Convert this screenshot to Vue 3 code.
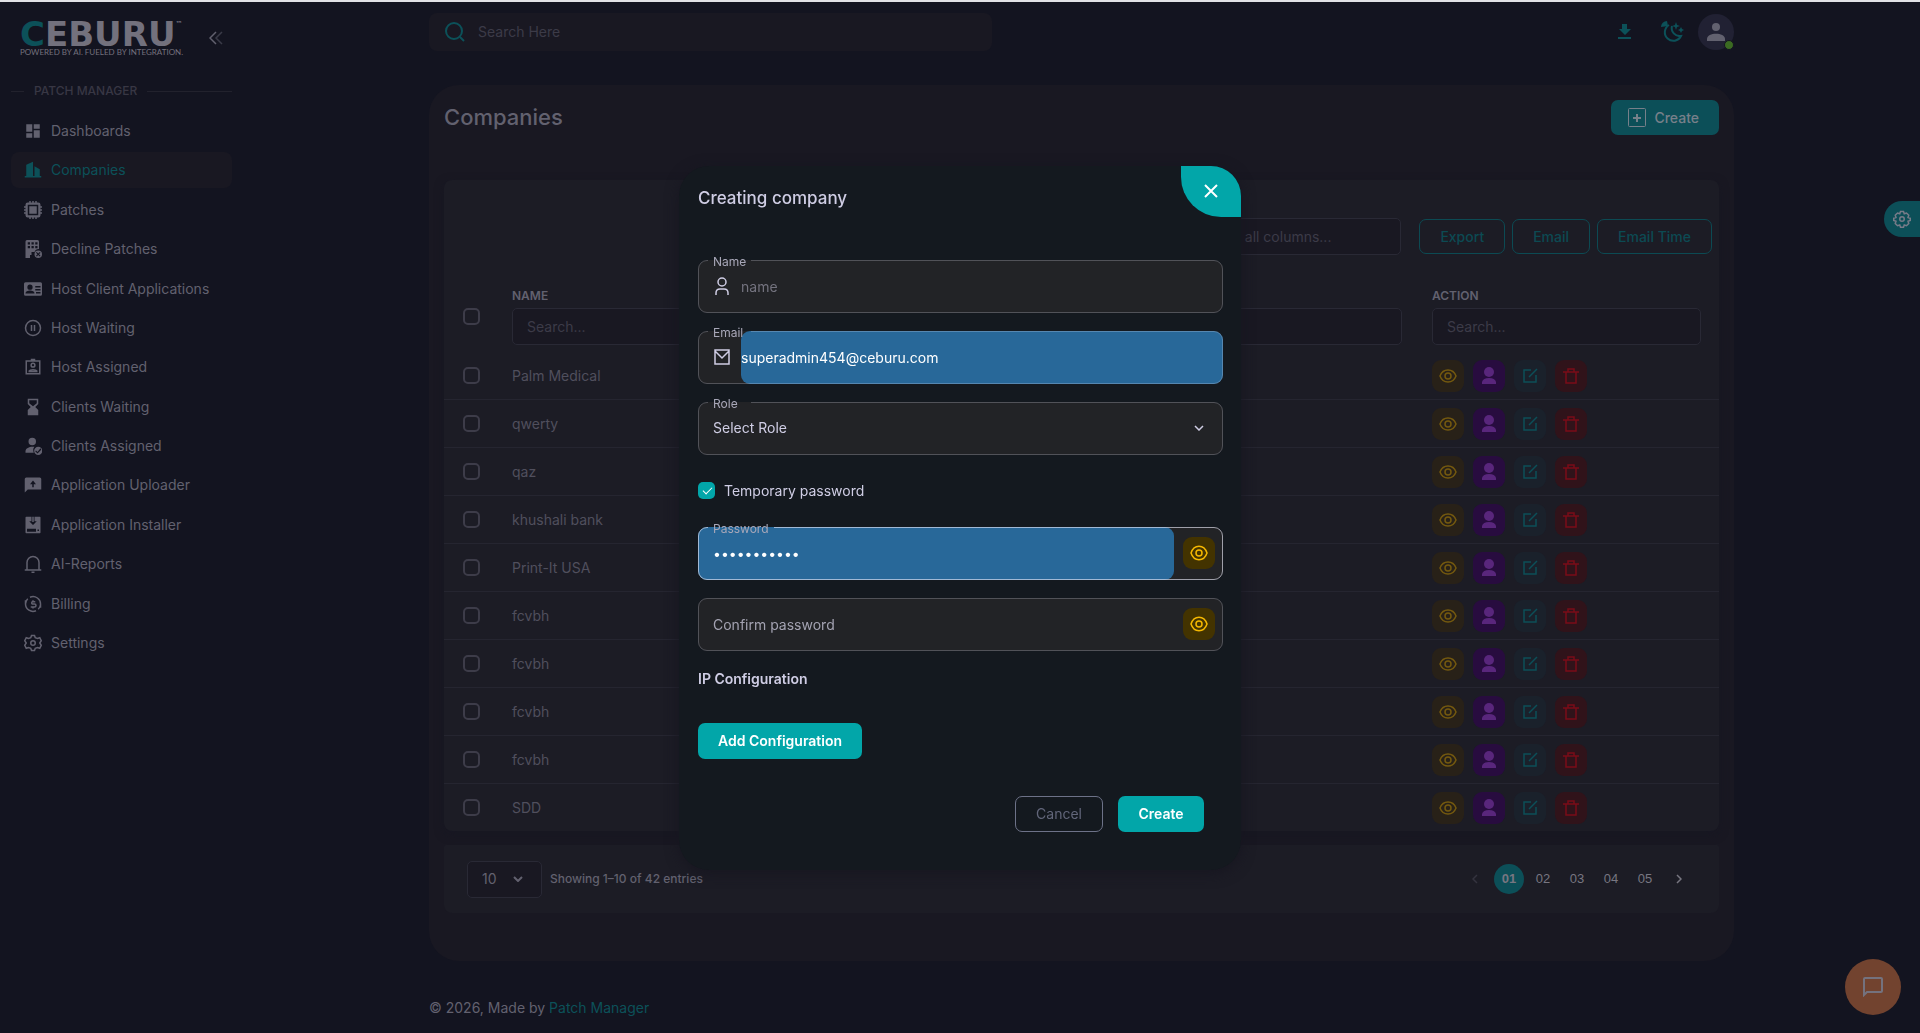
<script setup>
import { ref } from 'vue'

const navItems = [
  { label: 'Dashboards', d: 'M3 13h8V3H3zM3 21h8v-6H3zM13 21h8V11h-8zM13 3v6h8V3z' },
  { label: 'Companies', active: true, d: 'M3 20V5l9-4v19h2V7l7 4v9h2v2H1v-2z' },
  {
    label: 'Patches',
    d: 'M5 2h2V0h2v2h2V0h2v2h2V0h2v2h2a3 3 0 0 1 3 3v2h2v2h-2v2h2v2h-2v2h2v2h-2v2a3 3 0 0 1-3 3h-2v2h-2v-2h-2v2h-2v-2H9v2H7v-2H5a3 3 0 0 1-3-3v-2H0v-2h2v-2H0v-2h2V9H0V7h2V5a3 3 0 0 1 3-3zM5 5v14h14V5zM7 7h10v10H7z'
  },
  {
    label: 'Decline Patches',
    d: 'M4 0h14a2 2 0 0 1 2 2v10a6 6 0 0 0-6 4h-4v4H8v4H2V2a2 2 0 0 1 2-2zM5 3v3h3V3zM10 3v3h3V3zM15 3v3h3V3zM5 8v3h3V8zM10 8v3h3V8zM15 8v3h3V8zM19 14a5 5 0 1 1 0 10a5 5 0 0 1 0-10zM17 16l-1 1 2 2-2 2 1 1 2-2 2 2 1-1-2-2 2-2-1-1-2 2z'
  },
  {
    label: 'Host Client Applications',
    d: 'M2 3h20a2 2 0 0 1 2 2v14a2 2 0 0 1-2 2H2a2 2 0 0 1-2-2V5a2 2 0 0 1 2-2zM8 6a3 3 0 1 0 0 7a3 3 0 0 0 0-7zM2 18h12c0-3-3-4-6-4s-6 1-6 4zM15 8v2h7V8zM15 12v2h7v-2zM16 16v2h6v-2z'
  },
  { label: 'Host Waiting', line: true, d: 'M12 2a10 10 0 1 0 0 20a10 10 0 0 0 0-20zM10 8v8M14 8v8' },
  {
    label: 'Host Assigned',
    line: true,
    d: 'M3 4h18v17H3zM10 4V2h4v2M12 7a2.500 2.500 0 1 0 0 5a2.500 2.500 0 0 0 0-5zM7 18v-1c1-2 9-2 10 0v1z'
  },
  { label: 'Clients Waiting', d: 'M5 1h14v7l-4 4 4 4v7H5v-7l4-4-4-4zM7 3v4l5 4 5-4V3z' },
  {
    label: 'Clients Assigned',
    d: 'M11 1a5 5 0 1 1 0 10a5 5 0 0 1 0-10zM2 21v-2c0-4 5-6 9-6h3c-2 2-2 5-1 8zM19 13a5 5 0 1 1 0 11a5 5 0 0 1 0-11zM18 20l-2-2-1 1 3 3 5-5-1-2z'
  },
  { label: 'Application Uploader', d: 'M3 2h18a2 2 0 0 1 2 2v14H5l-4 4V4a2 2 0 0 1 2-2zM11 15h2v-4h3l-4-5-4 5h3z' },
  {
    label: 'Application Installer',
    d: 'M3 1h7v6H7l5 5 5-5h-3V1h7a1 1 0 0 1 1 1v20a1 1 0 0 1-1 1H3a1 1 0 0 1-1-1V2a1 1 0 0 1 1-1zM4 17v4h12v-4zM18 18v2h2v-2zM11 1h2v7h-2z'
  },
  { label: 'AI-Reports', line: true, d: 'M4 19V10a8 8 0 0 1 16 0v9M1 20h22M10 23h4' },
  {
    label: 'Billing',
    line: true,
    d: 'M8 3a10 10 0 0 1 14 10M2 7v5a10 10 0 0 0 14 9M2 12a10 10 0 0 1 3-7M22 17v-5M22 13a10 10 0 0 1-3 6M15 9H11a2 2 0 0 0 0 3h3a2 2 0 0 1 0 4H9M12 7v2M12 16v2'
  },
  {
    label: 'Settings',
    line: true,
    d: 'M12 9a3 3 0 1 0 0 6a3 3 0 0 0 0-6zM10 2h4l1 3 3 1 3-1 2 4-2 3 2 3-2 4-3-1-3 1-1 3h-4l-1-3-3-1-3 1-2-4 2-3-2-3 2-4 3 1 3-1z'
  }
]

const companies = ['Palm Medical', 'qwerty', 'qaz', 'khushali bank', 'Print-It USA', 'fcvbh', 'fcvbh', 'fcvbh', 'fcvbh', 'SDD']
const pages = ['01', '02', '03', '04', '05']

const email = ref('superadmin454@ceburu.com')
const password = ref('password123')
const temporary = ref(true)
</script>

<template>
  <div class="page">
    <aside class="sidebar">
      <div class="brand">
        <a class="logo" href="#" aria-label="Ceburu">
          <span class="logo-word"><span class="logo-c">C</span>EBURU<sup>™</sup></span>
          <span class="logo-tag">POWERED BY AI. FUELED BY INTEGRATION.</span>
        </a>
        <button class="collapse" aria-label="Collapse menu">
          <svg viewBox="0 0 14 14" width="14" height="14" fill="none" stroke="currentColor" stroke-width="1.500"><path d="M7 1L1 7l6 6" /><path d="M13 1L7 7l6 6" opacity=".5" /></svg>
        </button>
      </div>
      <h2 class="section-title">PATCH MANAGER</h2>
      <nav class="nav">
        <a v-for="item in navItems" :key="item.label" href="#" class="nav-item" :class="{ active: item.active }">
          <svg viewBox="0 0 24 24" width="18" height="18" fill-rule="evenodd" :class="item.line ? 'line' : 'solid'"><path :d="item.d" /></svg>
          {{ item.label }}
        </a>
      </nav>
    </aside>

    <main class="main">
      <header class="topbar">
        <label class="search">
          <svg viewBox="0 0 20 20" width="20" height="20" class="line"><circle cx="9" cy="9" r="8" /><path d="M15 15l4 4" /></svg>
          <input type="text" placeholder="Search Here" aria-label="Search Here" />
        </label>
        <div class="top-actions">
          <button class="bare" aria-label="Download"><svg viewBox="0 0 14 16" width="14" height="16" class="solid"><path d="M4 0h5v5h4l-6 6-6-6h3zM0 13h13v2H0z" /></svg></button>
          <button class="bare" aria-label="Theme">
            <svg viewBox="0 0 24 24" width="24" height="24" class="line"><path d="M9 5a8.500 8.500 0 1 0 12 11a8 8 0 0 1-9-10" /><path class="filled" d="M1 7a6 6 0 0 1 6-6l1 5zM16 2l1 3 3 1-3 1-1 3-1-3-3-1 3-1zM21 7l1 2 2 1-2 1-1 2-1-2-2-1 2-1z" /></svg>
          </button>
          <button class="avatar" aria-label="Account">
            <svg viewBox="0 0 18 18" width="18" height="18" class="solid"><circle cx="9" cy="4" r="4" /><path d="M0 18v-2c0-7 18-7 18 0v2z" /></svg>
            <span class="status"></span>
          </button>
        </div>
      </header>

      <section class="panel">
        <div class="panel-head">
          <h1>Companies</h1>
          <button class="create">
            <svg viewBox="0 0 18 19" width="18" height="19" fill="none" stroke="currentColor"><rect x="0.500" y="0.500" width="17" height="18" rx="1" /><path d="M9 6v8M5 10h8" stroke-width="2" /></svg>
            Create
          </button>
        </div>

        <div class="table-card">
          <div class="toolbar">
            <input type="text" class="box" placeholder="Search all columns..." aria-label="Search all columns" />
            <button class="outline">Export</button>
            <button class="outline">Email</button>
            <button class="outline">Email Time</button>
          </div>
          <table>
            <colgroup><col class="col-check" /><col /><col /><col class="col-action" /></colgroup>
            <thead>
              <tr>
                <th class="check"><input type="checkbox" aria-label="Select all" /></th>
                <th><span>NAME</span><input type="text" class="box" placeholder="Search..." aria-label="Search name" /></th>
                <th><span></span><input type="text" class="box" aria-label="Search column" /></th>
                <th><span>ACTION</span><input type="text" class="box" placeholder="Search..." aria-label="Search action" /></th>
              </tr>
            </thead>
            <tbody>
              <tr v-for="(name, i) in companies" :key="i">
                <td class="check"><input type="checkbox" :aria-label="'Select ' + name" /></td>
                <td>{{ name }}</td>
                <td></td>
                <td>
                  <div class="actions">
                    <button class="act view" aria-label="View"><svg viewBox="0 0 18 14" width="18" height="14" class="line"><path d="M1 7c3-8 13-8 16 0c-3 8-13 8-16 0z" /><circle cx="9" cy="7" r="3" /></svg></button>
                    <button class="act user" aria-label="User"><svg viewBox="0 0 14 17" width="14" height="17" class="solid"><circle cx="7" cy="5" r="5" /><path d="M0 17v-2q1-4 7-4t7 4v2z" /></svg></button>
                    <button class="act edit" aria-label="Edit"><svg viewBox="0 0 16 16" width="16" height="16" class="line"><path d="M9 2H2v12h12V7M7 9l8-8" /></svg></button>
                    <button class="act del" aria-label="Delete"><svg viewBox="0 0 16 16" width="16" height="16" class="line"><path d="M0 4h16M3 4v11h10V4M5 4V1h6v3" /></svg></button>
                  </div>
                </td>
              </tr>
            </tbody>
          </table>
        </div>

        <div class="pager">
          <div class="page-size box">
            <select aria-label="Rows per page"><option>10</option></select>
            <svg viewBox="0 0 10 6" width="10" height="6" class="line"><path d="M1 1l4 4 4-4" /></svg>
          </div>
          <span class="summary">Showing 1–10 of 42 entries</span>
          <div class="pages">
            <button class="arrow off" aria-label="Previous" disabled><svg viewBox="0 0 6 10" width="6" height="10" class="line"><path d="M5 1L1 5l4 4" /></svg></button>
            <button v-for="(p, i) in pages" :key="p" class="page-no" :class="{ current: i === 0 }">{{ p }}</button>
            <button class="arrow" aria-label="Next"><svg viewBox="0 0 6 10" width="6" height="10" class="line"><path d="M1 1l4 4-4 4" /></svg></button>
          </div>
        </div>
      </section>

      <footer class="foot">© 2026, Made by <a href="#">Patch Manager</a></footer>
    </main>

    <button class="settings-tab" aria-label="Customize">
      <svg viewBox="0 0 24 24" width="18" height="18" class="line"><circle cx="12" cy="12" r="3" /><path d="M10 2h4l1 3 3-1 3 3-1 3 3 1v3l-3 1 1 3-3 3-3-1-1 3h-4l-1-3-3 1-3-3 1-3-3-1v-3l3-1-1-3 3-3 3 1z" /></svg>
    </button>
    <button class="chat" aria-label="Chat">
      <svg viewBox="0 0 20 20" width="20" height="20" class="line"><path d="M1 18V2q0-1 1-1h16q1 0 1 1v12q0 1-1 1H4z" /></svg>
    </button>

    <div class="backdrop">
      <form class="dialog" role="dialog" aria-labelledby="dialog-title" @submit.prevent>
        <button type="button" class="close" aria-label="Close"><svg viewBox="0 0 14 14" width="14" height="14" class="line"><path d="M1 1l12 12M13 1L1 13" /></svg></button>
        <h2 id="dialog-title">Creating company</h2>

        <div class="field">
          <svg viewBox="0 0 14 18" width="14" height="18" class="line lead"><circle cx="7" cy="5" r="4" /><path d="M1 18v-2q0-4 4-4h4q4 0 4 4v2" /></svg>
          <input id="name" type="text" placeholder="name" />
          <fieldset><legend><label for="name">Name</label></legend></fieldset>
        </div>
        <div class="field">
          <svg viewBox="0 0 16 16" width="16" height="16" class="line lead mail"><path d="M1 1h14v14H1zM1 2l7 7 7-7" /></svg>
          <input id="email" v-model="email" type="email" class="autofill" />
          <fieldset><legend><label for="email">Email</label></legend></fieldset>
        </div>
        <div class="field">
          <select id="role" class="inset"><option>Select Role</option></select>
          <svg viewBox="0 0 10 6" width="10" height="6" class="line caret"><path d="M1 1l4 4 4-4" /></svg>
          <fieldset><legend><label for="role">Role</label></legend></fieldset>
        </div>

        <label class="temp"><input v-model="temporary" type="checkbox" />Temporary password</label>

        <div class="field strong">
          <input id="password" v-model="password" type="password" class="inset autofill" />
          <button type="button" class="eye" aria-label="Show password"><svg viewBox="0 0 18 16" width="18" height="16" class="line"><path d="M1 8c3-9 13-9 16 0c-3 9-13 9-16 0z" /><circle cx="9" cy="8" r="3" /></svg></button>
          <fieldset><legend><label for="password">Password</label></legend></fieldset>
        </div>
        <div class="field">
          <input type="password" class="inset confirm" placeholder="Confirm password" aria-label="Confirm password" />
          <button type="button" class="eye" aria-label="Show password"><svg viewBox="0 0 18 16" width="18" height="16" class="line"><path d="M1 8c3-9 13-9 16 0c-3 9-13 9-16 0z" /><circle cx="9" cy="8" r="3" /></svg></button>
          <fieldset></fieldset>
        </div>

        <h3>IP Configuration</h3>
        <button type="button" class="primary add">Add Configuration</button>
        <div class="dialog-actions">
          <button type="button" class="cancel">Cancel</button>
          <button class="primary">Create</button>
        </div>
      </form>
    </div>
  </div>
</template>

<style>
body {
  background: #131420;
}
</style>

<style scoped>
* {
  box-sizing: border-box;
}
.page {
  display: flex;
  min-height: 100vh;
  border-top: 2px solid #e2e2e6;
  background: #131420;
  color: #62616f;
  font: 14px/20px Inter, sans-serif;
}
button,
input,
select {
  font: inherit;
  color: inherit;
  border: 0;
  margin: 0;
  padding: 0;
  background: none;
  outline: 0;
  min-width: 0;
}
select {
  appearance: none;
}
h1,
h2,
h3 {
  margin: 0;
  font-weight: 500;
}
a {
  color: inherit;
  text-decoration: none;
}
svg {
  display: block;
  flex: none;
}
.line {
  fill: none;
  stroke: currentColor;
  stroke-width: 2;
}
.solid,
.filled {
  fill: currentColor;
  stroke: none;
}

/* Sidebar */
.sidebar {
  flex: none;
  width: 243px;
  padding: 19px 11px 0 11px;
}
.brand {
  display: flex;
  justify-content: space-between;
  height: 60px;
  padding: 0 9px;
}
.logo {
  display: flex;
  flex-direction: column;
  gap: 2px;
  color: #73717d;
}
.logo-word {
  font-family: 'DejaVu Sans', sans-serif;
  font-size: 34px;
  line-height: 26px;
  font-weight: 700;
  white-space: nowrap;
}
.logo-word sup {
  font-size: 7px;
  line-height: 7px;
  vertical-align: top;
}
.logo-c {
  color: #0c5159;
}
.logo-tag {
  font-family: Lato, sans-serif;
  font-size: 8px;
  line-height: 7px;
  font-weight: 400;
  white-space: nowrap;
}
.collapse {
  align-self: flex-start;
  margin-top: 10px;
}
.section-title {
  display: flex;
  align-items: center;
  gap: 10px;
  height: 20px;
  font-size: 12px;
  font-weight: 500;
  color: #383744;
}
.section-title::before,
.section-title::after {
  content: '';
  width: 13px;
  height: 1px;
  background: #22222d;
}
.section-title::after {
  flex: 1;
}
.nav {
  display: flex;
  flex-direction: column;
  justify-content: space-between;
  height: 548px;
  margin-top: 12px;
}
.nav-item {
  display: flex;
  align-items: center;
  gap: 9px;
  height: 36px;
  padding-left: 13px;
  border-radius: 8px;
}
.nav-item.active {
  background: #191822;
  color: #0c5159;
}

/* Main column */
.main {
  flex: 1;
  max-width: 1353px;
  margin: 0 auto;
  padding: 11px 24px 0;
}
.topbar {
  display: flex;
  align-items: center;
  justify-content: space-between;
  height: 38px;
}
.search {
  display: flex;
  align-items: center;
  gap: 13px;
  width: 563px;
  height: 38px;
  padding: 0 16px;
  border-radius: 8px;
  background: #191822;
  color: #0c5159;
}
.search input {
  flex: 1;
}
input::placeholder {
  color: #3c3b48;
  opacity: 1;
}
.top-actions {
  display: flex;
  align-items: center;
  color: #0c5159;
}
.bare {
  margin-right: 28px;
}
.bare + .bare {
  margin-right: 14px;
}
.avatar {
  position: relative;
  display: grid;
  place-items: center;
  width: 36px;
  height: 36px;
  border-radius: 50%;
  background: #212133;
  color: #62616f;
}
.status {
  position: absolute;
  right: 0;
  bottom: 0;
  width: 10px;
  height: 10px;
  border: 1px solid #131420;
  border-radius: 50%;
  background: #3b6a22;
}
.panel {
  margin-top: 34px;
  padding: 15px 15px 48px;
  border-radius: 30px;
  background: #191822;
}
.panel-head {
  display: flex;
  justify-content: space-between;
  align-items: center;
  margin-bottom: 45px;
}
h1 {
  font-size: 22px;
  line-height: 35px;
}
.create {
  display: flex;
  align-items: center;
  gap: 8px;
  height: 35px;
  padding: 0 20px 0 17px;
  border-radius: 7px;
  background: #0c4f58;
  color: #77808a;
  font-weight: 500;
}
.table-card {
  padding-top: 38px;
  border-radius: 8px;
  background: #1c1c25;
  box-shadow: 0 3px 10px #171722;
}
.toolbar {
  display: flex;
  justify-content: flex-end;
  align-items: center;
  gap: 7px;
  padding-right: 7px;
}
.box {
  height: 37px;
  border: 1px solid #292935;
  border-radius: 5px;
  background: #191822;
}
input.box {
  display: block;
  padding: 0 14px;
}
.toolbar .box {
  width: 222px;
  margin-right: 11px;
}
.outline {
  height: 35px;
  padding: 0 20px;
  border: 1px solid #0c4a53;
  border-radius: 7px;
  color: #0c4a53;
  font-weight: 500;
}
table {
  width: 100%;
  table-layout: fixed;
  border-collapse: separate;
  border-spacing: 0;
}
.col-check {
  width: 53px;
}
.col-action {
  width: 302px;
}
th {
  padding: 33px 15px 7px;
  text-align: left;
  font-weight: 400;
}
th:last-child {
  padding-right: 18px;
}
th span {
  display: block;
  height: 16px;
  margin-bottom: 4px;
  font-size: 12px;
  line-height: 16px;
  font-weight: 600;
}
th .box {
  width: 100%;
}
td {
  height: 48px;
  padding: 0 15px;
  border-bottom: 1px solid #252530;
  color: #504f5d;
}
tr:last-child td {
  height: 47px;
  border-bottom: 0;
}
th.check,
td.check {
  padding-left: 19px;
  padding-right: 0;
}
.check input {
  display: block;
  appearance: none;
  width: 17px;
  height: 17px;
  border: 2px solid #3d3c49;
  border-radius: 5px;
}
.actions {
  display: flex;
  gap: 9px;
}
.act,
.eye {
  display: grid;
  place-items: center;
  width: 32px;
  height: 32px;
  border-radius: 9px;
}
.act .line {
  stroke-width: 1.500;
}
.view {
  background: #282118;
  color: #74590f;
}
.user {
  background: #280c3f;
  color: #59267c;
}
.edit {
  background: #1a212b;
  color: #0c4f58;
}
.del {
  background: #30131a;
  color: #7a0c18;
}
.pager {
  display: flex;
  align-items: center;
  height: 68px;
  margin-top: 14px;
  padding: 0 25px 0 23px;
  border-radius: 2px 2px 8px 8px;
  background: #1c1c25;
}
.page-size {
  display: flex;
  align-items: center;
  width: 75px;
  padding: 0 18px 0 14px;
  margin-right: 8px;
}
.page-size select {
  flex: 1;
}
.summary {
  font-size: 12px;
  font-weight: 500;
}
.pages {
  display: flex;
  align-items: center;
  gap: 4px;
  margin-left: auto;
}
.page-no,
.arrow {
  display: grid;
  place-items: center;
  width: 30px;
  height: 30px;
  border-radius: 50%;
  color: #777681;
  font: 13px/20px 'Liberation Sans', sans-serif;
}
.arrow .line {
  stroke-width: 1.500;
}
.off {
  color: #34333f;
}
.current {
  background: #0c4f58;
  font-weight: 700;
}
.foot {
  margin-top: 37px;
}
.foot a {
  color: #0c5159;
}

/* Floating controls */
.settings-tab {
  position: fixed;
  top: 201px;
  right: 0;
  display: grid;
  place-items: center;
  width: 36px;
  height: 36px;
  border-radius: 18px 0 0 18px;
  background: #0c4f58;
  color: #777b88;
}
.chat {
  position: fixed;
  right: 19px;
  bottom: 18px;
  display: grid;
  place-items: center;
  width: 56px;
  height: 56px;
  border-radius: 50%;
  background: #72432f;
  color: #74727e;
}

/* Dialog */
.backdrop {
  position: fixed;
  inset: 2px 0 0;
  display: flex;
  align-items: center;
  justify-content: center;
}
.dialog {
  position: relative;
  width: 562px;
  padding: 19px 18px 38px 19px;
  border-radius: 30px;
  background: #14191f;
  box-shadow: 0 3px 14px #171620;
  color: #cfcde4;
}
.close {
  position: absolute;
  top: 0;
  right: 0;
  display: grid;
  place-items: center;
  width: 60px;
  height: 51px;
  border-radius: 0 30px 0 40px;
  background: #02a6a9;
  color: #fff;
}
h2#dialog-title {
  margin-bottom: 49px;
  font-size: 17px;
  line-height: 26px;
}
.field {
  position: relative;
  display: flex;
  align-items: center;
  height: 53px;
  margin-bottom: 18px;
  border-radius: 9px;
  background: #222326;
}
.field fieldset {
  position: absolute;
  inset: 0;
  min-width: 0;
  margin: 0;
  padding: 0 9px;
  border: 1px solid rgba(235, 235, 250, 0.24);
  border-radius: 9px;
  pointer-events: none;
}
.strong fieldset {
  border-color: rgba(235, 235, 250, 0.62);
}
.field legend {
  height: 0;
  min-width: 43px;
  padding: 0 5px;
  font-size: 12px;
  line-height: 4px;
  color: #a8a7b8;
}
.field input,
.field select {
  flex: 1;
  height: 53px;
  border-radius: 9px;
}
.lead {
  margin: 0 12px 0 17px;
}
.lead.line {
  stroke-width: 1.500;
}
.mail {
  margin: 0 11px 0 16px;
}
.field .inset {
  padding-left: 15px;
}
.field input::placeholder {
  color: #74737f;
}
.field .confirm::placeholder {
  color: #a3a2b1;
}
.field .autofill {
  background: #286899;
  color: #fff;
}
.caret {
  position: absolute;
  right: 19px;
  pointer-events: none;
}
.caret.line {
  stroke-width: 1.500;
}
.eye {
  margin: 0 8px 0 9px;
  background: #433300;
  color: #f5b800;
}
.eye .line {
  stroke-width: 1.500;
}
.temp {
  display: flex;
  align-items: center;
  gap: 9px;
  height: 20px;
  margin: 26px 0;
}
.temp input {
  position: relative;
  appearance: none;
  width: 17px;
  height: 17px;
  border-radius: 5px;
  background: #02a6a9;
}
.temp input:checked::after {
  content: '';
  position: absolute;
  left: 5px;
  top: 5px;
  width: 8px;
  height: 4px;
  border: solid #fff;
  border-width: 0 0 1px 1px;
  transform: rotate(-45deg);
}
h3 {
  font-size: 14px;
  line-height: 20px;
  font-weight: 600;
}
.primary,
.cancel {
  height: 36px;
  padding: 0 20px;
  border-radius: 7px;
}
.primary {
  min-width: 86px;
  background: #02a6a9;
  color: #fff;
  font-weight: 600;
}
.add {
  margin-top: 34px;
}
.cancel {
  border: 1px solid #6d7288;
  color: #62667a;
}
.dialog-actions {
  display: flex;
  justify-content: flex-end;
  gap: 15px;
  margin-top: 37px;
  padding-right: 19px;
}
</style>
